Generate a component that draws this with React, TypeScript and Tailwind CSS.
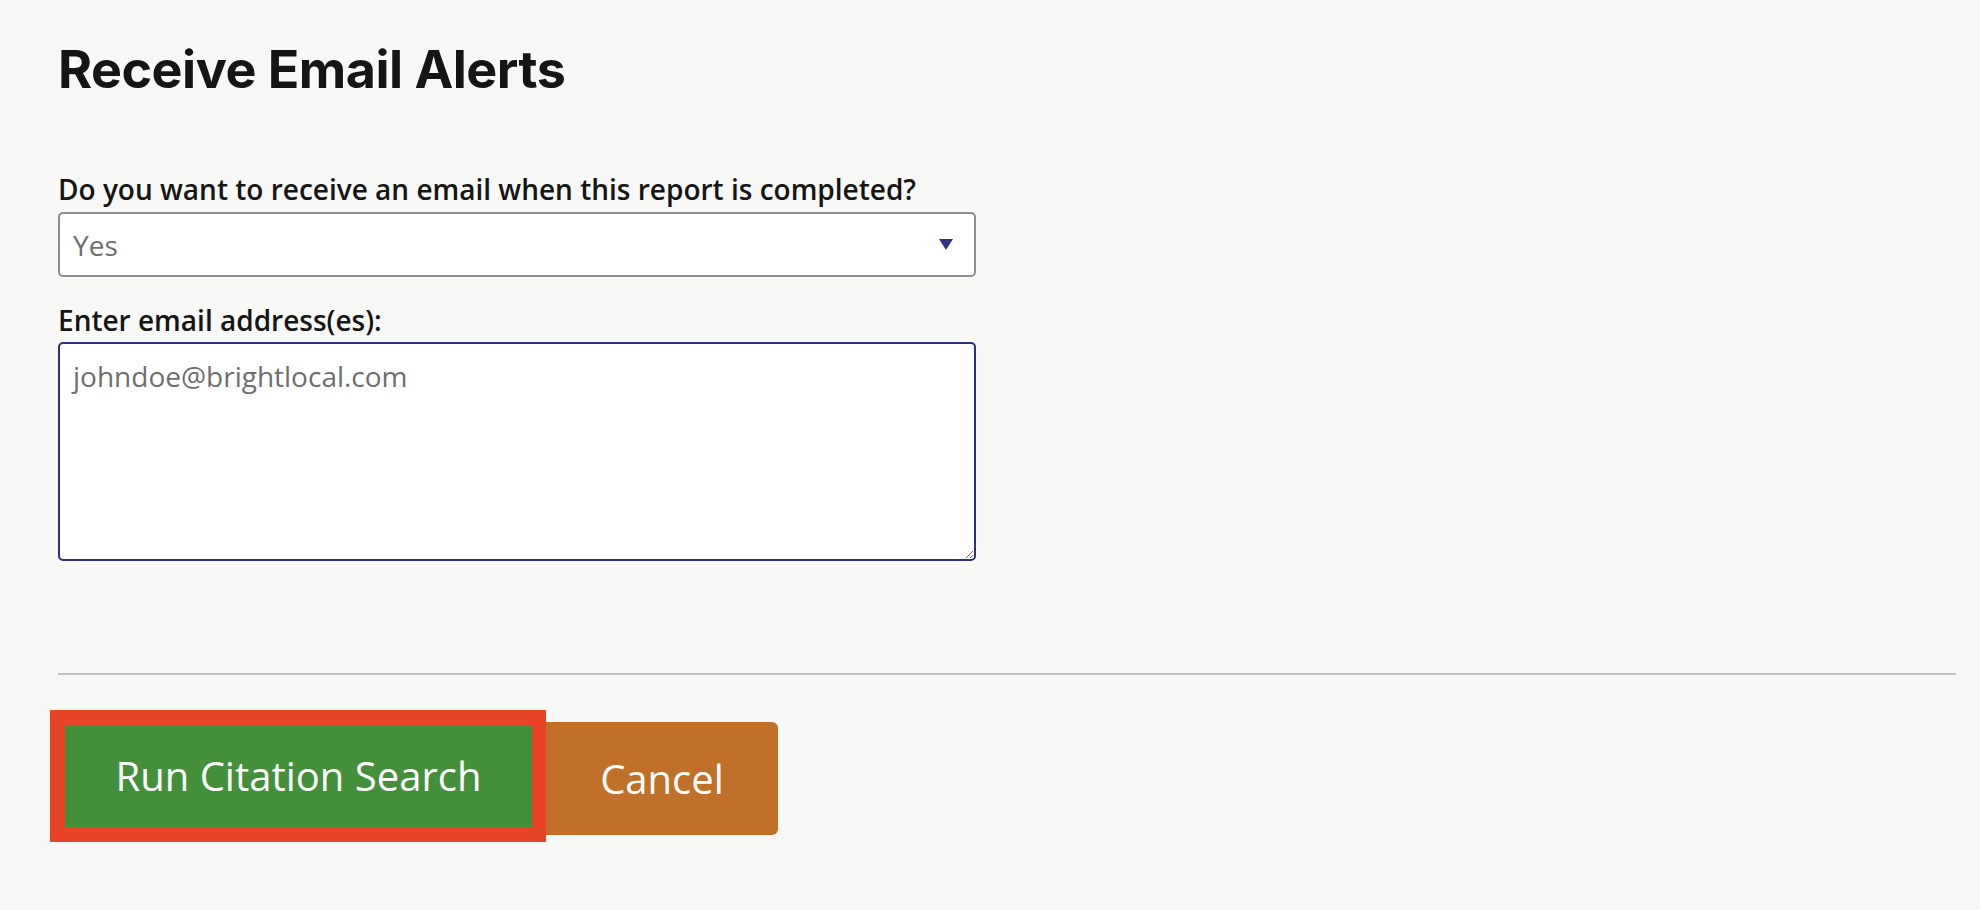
import React from "react";

const App = () => {
  return (
    <div
      className="min-h-screen bg-[#f8f8f6] pl-[58px] pr-[24px] pt-[44px]"
      style={{ fontFamily: '"Open Sans", sans-serif' }}
    >
      {/* Title */}
      <h1
        className="text-[52px] leading-none font-bold text-[#151515] tracking-[-0.5px]"
        style={{ fontFamily: 'Inter, "Noto Sans", sans-serif' }}
      >
        Receive Email Alerts
      </h1>

      {/* Form */}
      <div className="mt-[75px] w-[918px]">
        <label className="block text-[28px] leading-[36px] font-semibold text-[#151515]">
          Do you want to receive an email when this report is completed?
        </label>
        <div className="relative mt-[5px]">
          <select
            defaultValue="yes"
            className="w-full h-[65px] appearance-none rounded-[5px] border-2 border-[#8d8d8d] bg-white pl-[13px] text-[28px] text-[#6e6e6e] outline-none"
          >
            <option value="yes">Yes</option>
            <option value="no">No</option>
          </select>
          <svg
            className="absolute right-[23px] top-[27px] pointer-events-none"
            width="14"
            height="11"
            viewBox="0 0 14 11"
          >
            <polygon points="0,0 14,0 7,11" fill="#2e3383" />
          </svg>
        </div>

        <label className="block mt-[25px] text-[28px] leading-[36px] font-semibold text-[#151515]">
          Enter email address(es):
        </label>
        <textarea
          placeholder="johndoe@brightlocal.com"
          className="block mt-[4px] w-full h-[219px] rounded-[5px] border-2 border-[#2b2f7d] bg-white px-[13px] pt-[14px] pb-[10px] text-[28px] leading-[36px] text-[#333] placeholder:text-[#6e6e6e] outline-none"
        />
      </div>

      {/* Divider */}
      <div className="mt-[112px] h-[2px] bg-[#c0c0c0]" />

      {/* Actions */}
      <div className="mt-[35px] -ml-[8px] flex items-start">
        <div className="border-[15px] border-[#e84427] border-r-[14px]">
          <button className="h-[102px] w-[467px] bg-[#438f3a] text-white text-[40px] leading-none">
            Run Citation Search
          </button>
        </div>
        <button className="mt-[12px] h-[113px] w-[232px] rounded-r-[6px] bg-[#c07029] text-white text-[40px] leading-none">
          Cancel
        </button>
      </div>
    </div>
  );
};

export default App;
